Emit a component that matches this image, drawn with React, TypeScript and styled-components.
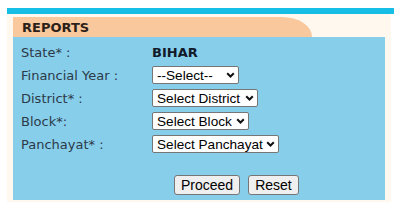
import styled, { createGlobalStyle } from "styled-components";

const GlobalStyle = createGlobalStyle`
  body {
    margin: 0;
    background: #ffffff;
    font-family: "DejaVu Sans", Verdana, sans-serif;
  }
`;

const Page = styled.div`
  padding: 8px 0 0 7px;
  width: 387px;
`;

const TopBar = styled.div`
  height: 6px;
  background: #16bee6;
`;

const Frame = styled.div`
  width: 372px;
  padding: 3px 6px 2px 6px;
  background: #fff8ef;
`;

const Tab = styled.div`
  width: 290px;
  height: 20px;
  padding-left: 9px;
  display: flex;
  align-items: center;
  background: #f9c89c;
  border-top-right-radius: 30px 20px;
  font-size: 13px;
  font-weight: bold;
  color: #2b2119;
`;

const Panel = styled.div`
  background: #87ceeb;
  padding: 6px 8px 5px 8px;
  display: flex;
  flex-direction: column;
`;

const Rows = styled.div`
  display: grid;
  grid-template-columns: 131px 1fr;
  grid-auto-rows: 18px;
  row-gap: 5px;
  align-items: center;
`;

const Label = styled.span`
  font-size: 13px;
  color: #2c3a48;
  white-space: pre;
`;

const Value = styled.span`
  font-size: 13px;
  font-weight: bold;
  color: #111a28;
`;

const SelectBox = styled.div<{ $w: number }>`
  width: ${(p) => p.$w}px;
  height: 18px;
  box-sizing: border-box;
  display: flex;
  align-items: center;
  background: #ffffff;
  border: 1px solid #767676;
  border-radius: 2px;
`;

const NativeSelect = styled.select`
  appearance: none;
  flex: 1;
  min-width: 0;
  height: 100%;
  border: none;
  background: transparent;
  padding: 0 0 0 4px;
  margin: 0;
  font-family: "Liberation Sans", Arial, sans-serif;
  font-size: 13.6px;
  color: #000000;
  outline: none;
`;

const Chevron = styled.svg`
  width: 9px;
  height: 6px;
  margin-right: 3px;
  flex-shrink: 0;
`;

const Actions = styled.div`
  display: flex;
  gap: 8px;
  margin-top: 22px;
  padding-left: 153px;
`;

const Button = styled.button`
  height: 20px;
  padding: 0 6px;
  background: #efefef;
  border: 1px solid #767676;
  border-radius: 3px;
  font-family: "Liberation Sans", Arial, sans-serif;
  font-size: 14px;
  color: #000000;
`;

const Dropdown = ({ width, placeholder }: { width: number; placeholder: string }) => (
  <SelectBox $w={width}>
    <NativeSelect defaultValue="">
      <option value="">{placeholder}</option>
    </NativeSelect>
    <Chevron viewBox="0 0 9 6">
      <path d="M1.2 1.2 L4.5 4.5 L7.8 1.2" fill="none" stroke="#111" strokeWidth="2" />
    </Chevron>
  </SelectBox>
);

const App = () => (
  <Page>
    <GlobalStyle />
    <TopBar />
    <Frame>
      <Tab>REPORTS</Tab>
      <Panel>
        <Rows>
          <Label>State* :</Label>
          <Value>BIHAR</Value>
          <Label>Financial Year :</Label>
          <Dropdown width={87} placeholder="--Select--" />
          <Label>District* :</Label>
          <Dropdown width={106} placeholder="Select District" />
          <Label>Block*:</Label>
          <Dropdown width={97} placeholder="Select Block" />
          <Label>Panchayat* :</Label>
          <Dropdown width={127} placeholder="Select Panchayat" />
        </Rows>
        <Actions>
          <Button type="button">Proceed</Button>
          <Button type="button">Reset</Button>
        </Actions>
      </Panel>
    </Frame>
  </Page>
);

export default App;
